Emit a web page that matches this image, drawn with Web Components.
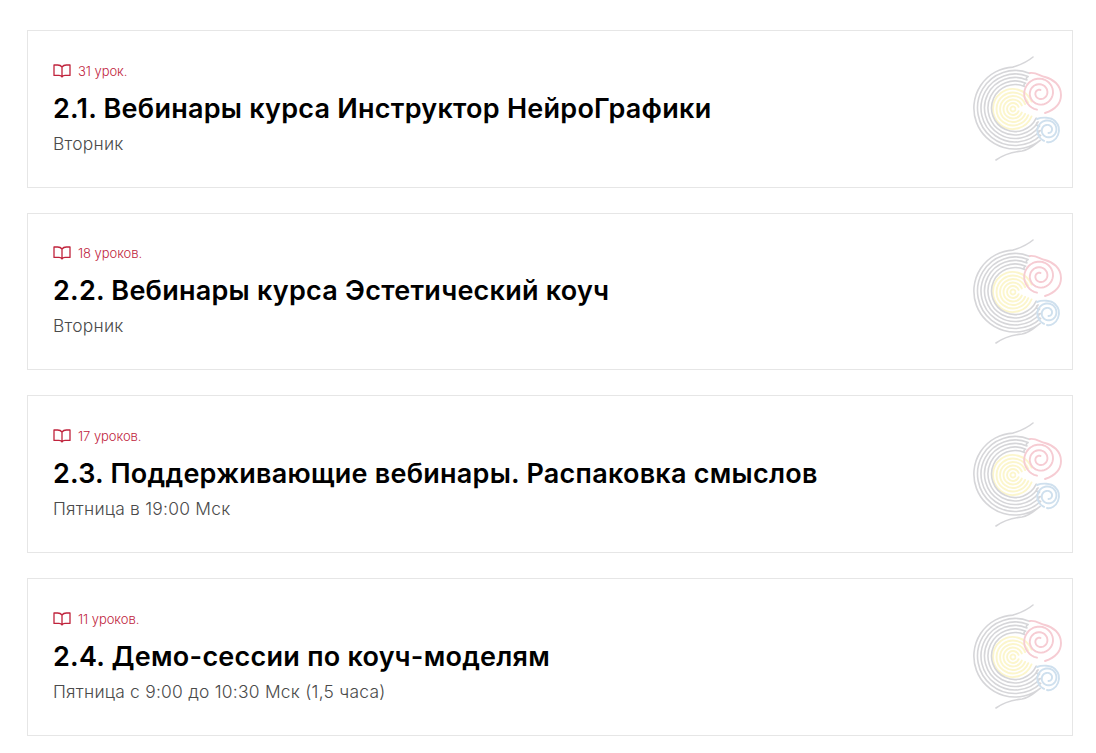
<!DOCTYPE html>
<html lang="ru">
<head>
<meta charset="utf-8">
<title>Вебинары</title>
<style>
body { margin: 0; background: #fff; font-family: Inter, "Liberation Sans", sans-serif; }
</style>
</head>
<body>
<course-list>
  <course-card lessons="31 урок." heading="2.1. Вебинары курса Инструктор НейроГрафики" note="Вторник"></course-card>
  <course-card lessons="18 уроков." heading="2.2. Вебинары курса Эстетический коуч" note="Вторник"></course-card>
  <course-card lessons="17 уроков." heading="2.3. Поддерживающие вебинары. Распаковка смыслов" note="Пятница в 19:00 Мск"></course-card>
  <course-card lessons="11 уроков." heading="2.4. Демо-сессии по коуч-моделям" note="Пятница с 9:00 до 10:30 Мск (1,5 часа)"></course-card>
</course-list>
<script>
const polar = (cx, cy, r, deg) => {
  const a = deg * Math.PI / 180
  return (cx + r * Math.cos(a)).toFixed(1) + ' ' + (cy + r * Math.sin(a)).toFixed(1)
}

// arc that goes counter-clockwise from a to b (the way round the left side)
const arcLeft = (cx, cy, r, a, b) => {
  const span = (a - b + 360) % 360
  return 'A' + r + ' ' + r + ' 0 ' + (span > 180 ? 1 : 0) + ' 0 ' + polar(cx, cy, r, b)
}
const arcRight = (cx, cy, r, a, b) => {
  const span = (b - a + 360) % 360
  return 'A' + r + ' ' + r + ' 0 ' + (span > 180 ? 1 : 0) + ' 1 ' + polar(cx, cy, r, b)
}

// sampled spiral, radius goes from r0 to r1 while the angle goes from a0 to a1
const spiral = (cx, cy, r0, r1, a0, a1) => {
  const steps = Math.ceil(Math.abs(a1 - a0) / 10)
  const points = []
  for (let i = 0; i <= steps; i++) {
    const t = i / steps
    points.push(polar(cx, cy, r0 + (r1 - r0) * t, a0 + (a1 - a0) * t))
  }
  return 'M' + points.join(' L')
}

// inner gray rings, joined by hairpins at alternate ends
const CX = 45
const CY = 53
const rings = [37.5, 34, 30.5, 27, 23.5]
const topAngle = r => -68 + (41 - r) * 0.1
const bottomAngle = r => 52 - (41 - r) * 1.5
let serpentine = 'M' + polar(CX, CY, rings[0], topAngle(rings[0]))
rings.forEach((r, i) => {
  const down = i % 2 === 0
  const from = down ? topAngle(r) : bottomAngle(r)
  const to = down ? bottomAngle(r) : topAngle(r)
  serpentine += ' ' + (down ? arcLeft(CX, CY, r, from, to) : arcRight(CX, CY, r, from, to))
  const next = rings[i + 1]
  if (next) {
    const end = down ? bottomAngle(next) : topAngle(next)
    serpentine += ' A2 2 0 0 ' + (down ? 1 : 0) + ' ' + polar(CX, CY, next, end)
  }
})
const outerRing = 'M63 2C57 7 50 10 43 12 ' + 'L' + polar(CX, CY, 41, -93) + ' ' + arcLeft(CX, CY, 41, -93, 52) +
  ' C64 90 60 95 52 96 C42 97 33 100 26 105'
const yellowRings = [20, 16.5, 13, 9.5, 6, 2.5]
  .map(r => 'M' + polar(43, 54, r, -22) + ' ' + arcLeft(43, 54, r, -22, 22)).join(' ')

const logoTemplate = document.createElement('template')
logoTemplate.innerHTML = `
<style>
:host { display: block; width: 93px; height: 107px; flex: none; }
svg { display: block; }
path { fill: none; stroke-width: 1.6; stroke-linecap: round; stroke-linejoin: round; }
.gray { stroke: #d6d6d9; }
.yellow { stroke: #fcf6cc; stroke-width: 1.9; }
.red { stroke: #f6ccd3; stroke-width: 1.9; }
.blue { stroke: #cfe0ee; stroke-width: 1.9; }
</style>
<svg width="93" height="107" viewBox="0 0 93 107">
  <path class="yellow" d="${yellowRings}"/>
  <path class="gray" d="${outerRing}"/>
  <path class="gray" d="${serpentine}"/>
  <path class="red" d="M60 18C66 17 70 21 75 22C83 24 91 30 91 40C91 49 84 55 75 58"/>
  <path class="red" d="${spiral(70, 38, 17, 3, 100, 1000)}"/>
  <path class="blue" d="M67 64C72 62 81 62 85 66C89 70 90 75 88 80C86 85 81 88 77 87"/>
  <path class="blue" d="${spiral(78, 75, 11.5, 3, 110, 800)}"/>
</svg>
`
class NeuroLogo extends HTMLElement {
  constructor () {
    super()
    this.attachShadow({ mode: 'open' })
    this.shadowRoot.appendChild(logoTemplate.content.cloneNode(true))
  }
}
customElements.define('neuro-logo', NeuroLogo)

const cardTemplate = document.createElement('template')
cardTemplate.innerHTML = `
<style>
:host {
  display: flex;
  align-items: center;
  justify-content: space-between;
  box-sizing: border-box;
  height: 157.67px;
  padding: 0 9px 0 25px;
  border: 1px solid #e6e6e6;
  background: #fff;
}
.lessons {
  display: flex;
  align-items: center;
  gap: 7px;
  font-size: 13px;
  line-height: 16px;
  font-weight: 300;
  letter-spacing: -0.05px;
  color: #c0233c;
}
.lessons svg { display: block; flex: none; }
h2 {
  margin: 14px 0 8px;
  font-size: 27px;
  line-height: 32px;
  font-weight: 600;
  letter-spacing: 0.25px;
  color: #000;
}
.note {
  font-size: 17.4px;
  line-height: 22px;
  font-weight: 300;
  letter-spacing: 0.25px;
  color: #4a4a4a;
}
</style>
<div class="text">
  <div class="lessons">
    <svg width="18" height="14" viewBox="0 0 18 14" fill="none" stroke="#c0233c" stroke-width="1.3" stroke-linejoin="round">
      <path d="M9 3C8 1.6 6.4 1 4.6 1H1v10.4h5C7.600 11.400 8.400 12 9 13C9.600 12 10.400 11.400 12 11.400h5V1h-3.600C11.600 1 10 1.600 9 3V13"/>
    </svg>
    <span class="count"></span>
  </div>
  <h2></h2>
  <div class="note"></div>
</div>
<neuro-logo></neuro-logo>
`
class CourseCard extends HTMLElement {
  constructor () {
    super()
    this.attachShadow({ mode: 'open' })
    this.shadowRoot.appendChild(cardTemplate.content.cloneNode(true))
  }

  connectedCallback () {
    this.shadowRoot.querySelector('.count').textContent = this.getAttribute('lessons')
    this.shadowRoot.querySelector('h2').textContent = this.getAttribute('heading')
    this.shadowRoot.querySelector('.note').textContent = this.getAttribute('note')
  }
}
customElements.define('course-card', CourseCard)

const listTemplate = document.createElement('template')
listTemplate.innerHTML = `
<style>
:host {
  display: flex;
  flex-direction: column;
  gap: 25px;
  padding: 30px 23px 18px 27px;
}
</style>
<slot></slot>
`
class CourseList extends HTMLElement {
  constructor () {
    super()
    this.attachShadow({ mode: 'open' })
    this.shadowRoot.appendChild(listTemplate.content.cloneNode(true))
  }
}
customElements.define('course-list', CourseList)
</script>
</body>
</html>
